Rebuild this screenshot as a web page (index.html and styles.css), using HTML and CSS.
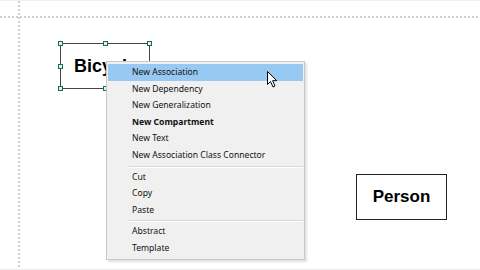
FILE: index.html
```html
<!DOCTYPE html>
<html lang="en">

<head>
  <meta charset="UTF-8">
  <title>Class Diagram</title>
  <link rel="stylesheet" href="styles.css">
</head>

<body>
  <div class="canvas">
    <div class="guide guide-h"></div>
    <div class="guide guide-v"></div>

    <div class="node node-bicycle selected">
      <span class="node-name">Bicycle</span>
      <span class="handle h-tl"></span>
      <span class="handle h-tc"></span>
      <span class="handle h-tr"></span>
      <span class="handle h-ml"></span>
      <span class="handle h-bl"></span>
      <span class="handle h-bc"></span>
    </div>

    <div class="node node-person">
      <span class="node-name">Person</span>
    </div>

    <ul class="context-menu">
      <li class="menu-item active">New Association</li>
      <li class="menu-item">New Dependency</li>
      <li class="menu-item">New Generalization</li>
      <li class="menu-item bold">New Compartment</li>
      <li class="menu-item">New Text</li>
      <li class="menu-item">New Association Class Connector</li>
      <li class="menu-sep"></li>
      <li class="menu-item">Cut</li>
      <li class="menu-item">Copy</li>
      <li class="menu-item">Paste</li>
      <li class="menu-sep"></li>
      <li class="menu-item">Abstract</li>
      <li class="menu-item">Template</li>
    </ul>

    <svg class="cursor" width="12" height="18" viewBox="0 0 12 18">
      <path d="M0.5 0.5 L0.5 13.5 L3.5 10.5 L6 16 L8 15 L5.6 9.7 L9.8 9.7 Z" fill="#fff" stroke="#000" stroke-width="1" stroke-linejoin="miter"/>
    </svg>
  </div>
</body>

</html>
```

FILE: styles.css
```css
* {
  margin: 0;
  padding: 0;
  box-sizing: border-box;
}

body {
  font-family: 'Liberation Sans', Arial, sans-serif;
  background-color: #fff;
  color: #000;
}

.canvas {
  position: relative;
  width: 480px;
  height: 270px;
  overflow: hidden;
  border-top: 1px solid #f0f0f0;
  border-bottom: 1px solid #ececec;
}

.guide {
  position: absolute;
}

.guide-h {
  left: 0;
  right: 0;
  top: 15px;
  height: 2px;
  background-image: linear-gradient(to right, #cfcfcf 2px, transparent 2px);
  background-size: 4px 2px;
}

.guide-v {
  left: 18px;
  top: 0;
  bottom: 0;
  width: 2px;
  background-image: linear-gradient(to bottom, #cfcfcf 2px, transparent 2px);
  background-size: 2px 4px;
}

/* diagram nodes */
.node {
  position: absolute;
  border: 1px solid #222;
  background-color: #fff;
  display: flex;
  align-items: center;
  justify-content: center;
}

.node-name {
  font-weight: 700;
}

.node-bicycle {
  left: 60px;
  top: 42px;
  width: 90px;
  height: 46px;
  justify-content: flex-start;
  padding-left: 13px;
  border-color: #444;
}

.node-bicycle .node-name {
  font-size: 18px;
}

.node-person {
  left: 356px;
  top: 173px;
  width: 91px;
  height: 46px;
}

.node-person .node-name {
  font-size: 17px;
}

.handle {
  position: absolute;
  width: 5px;
  height: 5px;
  border: 1px solid #1f6a4a;
  background-color: #dff3e8;
}

.h-tl { left: -3px; top: -3px; }
.h-tc { left: 42px; top: -3px; }
.h-tr { right: -3px; top: -3px; }
.h-ml { left: -3px; top: 20px; }
.h-bl { left: -3px; bottom: -3px; }
.h-bc { left: 42px; bottom: -3px; }

/* context menu */
.context-menu {
  position: absolute;
  left: 106px;
  top: 60px;
  width: 199px;
  list-style: none;
  background-color: #f0f0f0;
  border: 1px solid #c8c8c8;
  padding: 2px 1px;
  box-shadow: 2px 2px 2px rgba(0, 0, 0, 0.12);
  font-family: 'Noto Sans', sans-serif;
  font-size: 8.6px;
  color: #111;
}

.menu-item {
  height: 16.6px;
  line-height: 16.6px;
  padding-left: 24px;
  white-space: nowrap;
}

.menu-item.active {
  background-color: #98c9f2;
}

.menu-item.bold {
  font-weight: 700;
}

.menu-sep {
  height: 5px;
  margin-left: 21px;
  border-top: 2px solid transparent;
  position: relative;
}

.menu-sep::after {
  content: '';
  position: absolute;
  left: 0;
  right: 0;
  top: 0;
  height: 1px;
  background-color: #d6d6d6;
  box-shadow: 0 1px 0 #fff;
}

.cursor {
  position: absolute;
  left: 267px;
  top: 70px;
}
```
